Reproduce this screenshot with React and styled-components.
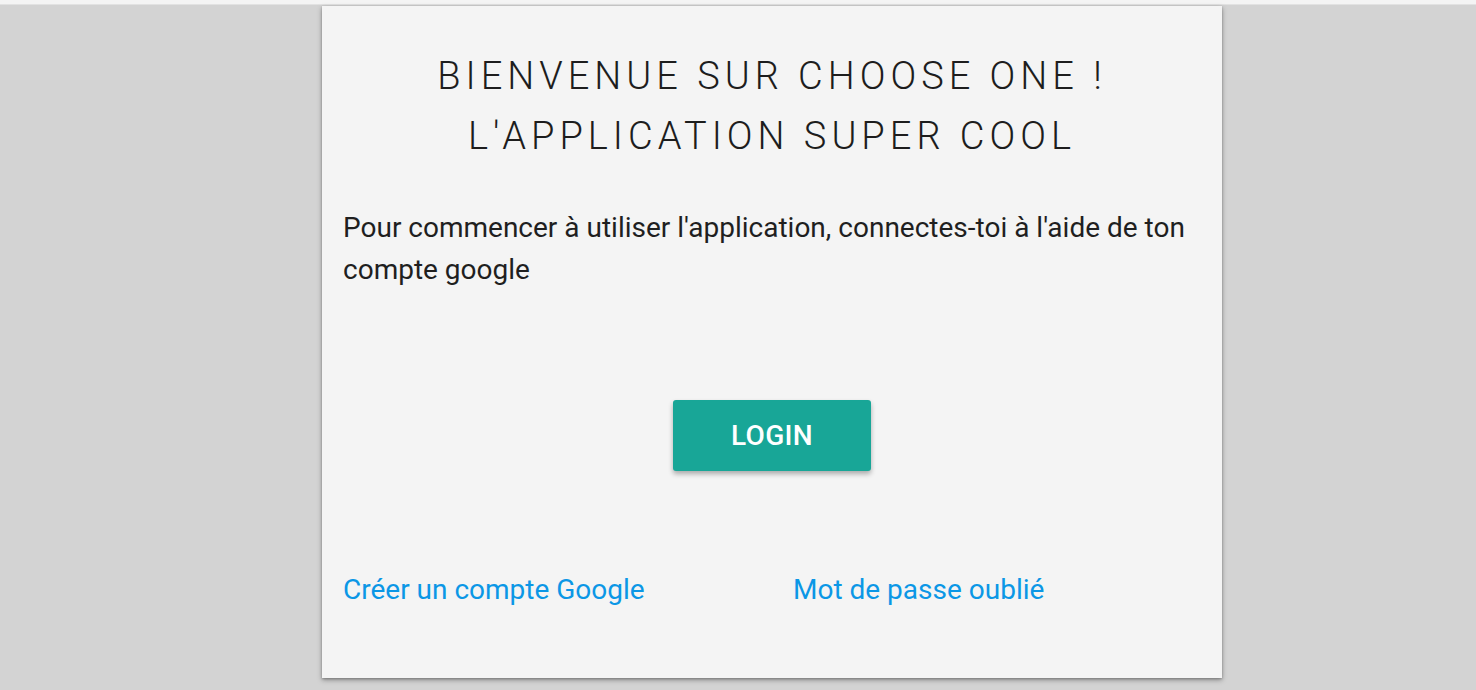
import React from "react";
import styled, { createGlobalStyle } from "styled-components";

const Global = createGlobalStyle`
  html, body { margin: 0; padding: 0; }
  body {
    background: #d3d3d3;
    font-family: Roboto, "Noto Sans", sans-serif;
    min-height: 690px;
  }
`;

const TopBar = styled.div`
  height: 4px;
  background: #f4f4f4;
  border-bottom: 1px solid #e2e2e2;
`;

const Stage = styled.main`
  display: flex;
  justify-content: center;
  padding: 1px 0 0 68px;
`;

const Card = styled.section`
  width: 900px;
  box-sizing: border-box;
  background: #f4f4f4;
  padding: 40px 21px 67px;
  box-shadow: 0 2px 5px rgba(0, 0, 0, 0.35), 0 1px 2px rgba(0, 0, 0, 0.2);
  display: flex;
  flex-direction: column;
`;

const Title = styled.h1`
  margin: 0;
  font-family: Roboto, sans-serif;
  font-weight: 300;
  font-size: 38px;
  line-height: 60px;
  letter-spacing: 5px;
  text-transform: uppercase;
  text-align: center;
  color: #1d1d1d;
`;

const Intro = styled.p`
  margin: 41px 0 0;
  font-size: 28px;
  line-height: 42px;
  color: #1f1f1f;
`;

const ButtonRow = styled.div`
  display: flex;
  justify-content: center;
  margin-top: 109px;
`;

const LoginButton = styled.button`
  width: 198px;
  height: 71px;
  border: none;
  border-radius: 3px;
  background: #18a697;
  color: #ffffff;
  font-family: Roboto, sans-serif;
  font-weight: 500;
  font-size: 28px;
  letter-spacing: 0.3px;
  box-shadow: 0 3px 5px rgba(0, 0, 0, 0.3);
  cursor: pointer;
`;

const Links = styled.div`
  display: grid;
  grid-template-columns: 450px 1fr;
  margin-top: 98px;
`;

const Link = styled.a`
  font-size: 28px;
  line-height: 42px;
  color: #0b97e6;
  text-decoration: none;
`;

export default function App() {
  return (
    <>
      <Global />
      <TopBar />
      <Stage>
        <Card>
          <Title>
            Bienvenue sur Choose One !
            <br />
            L'application super cool
          </Title>
          <Intro>
            Pour commencer à utiliser l'application, connectes-toi à l'aide de ton compte google
          </Intro>
          <ButtonRow>
            <LoginButton>LOGIN</LoginButton>
          </ButtonRow>
          <Links>
            <Link href="#">Créer un compte Google</Link>
            <Link href="#">Mot de passe oublié</Link>
          </Links>
        </Card>
      </Stage>
    </>
  );
}
